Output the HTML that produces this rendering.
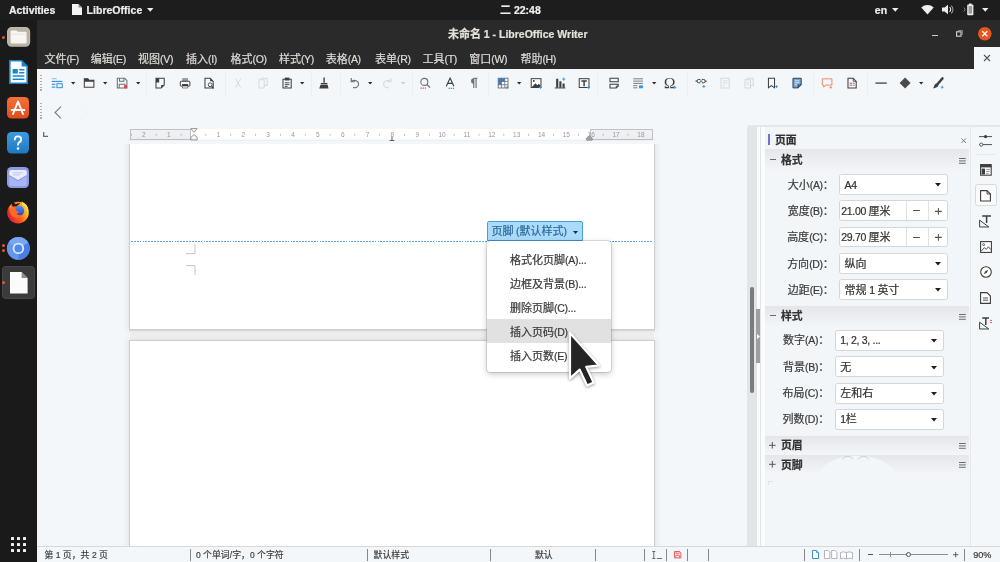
<!DOCTYPE html>
<html lang="zh-CN">
<head>
<meta charset="utf-8">
<title>未命名 1 - LibreOffice Writer</title>
<style>
html,body{margin:0;padding:0;background:#f3f7fa;}
body{width:1000px;height:562px;overflow:hidden;font-family:"Liberation Sans","Noto Sans CJK SC",sans-serif;}
#screen{position:relative;width:1000px;height:562px;overflow:hidden;will-change:transform;}
.b{position:absolute;box-sizing:border-box;}
.i{position:absolute;display:block;overflow:visible;}
.t{position:absolute;white-space:nowrap;letter-spacing:-0.3px;-webkit-text-stroke:0.22px;}
.cj{display:inline-block;position:relative;white-space:nowrap;vertical-align:baseline;letter-spacing:0;font-family:"Liberation Sans","Noto Sans CJK SC",sans-serif;}

</style>
</head>
<body>
<div id="screen">
<div class="b " style="left:0px;top:0px;width:1000px;height:19.6px;background:#1d1d1d"></div>
<div class="b " style="left:0px;top:19.6px;width:37px;height:542.4px;background:#1a1a1a"></div>
<div class="b " style="left:37px;top:19.6px;width:963px;height:49.4px;background:#2b2a2a"></div>
<div class="b " style="left:37px;top:69px;width:963px;height:493px;background:#f3f7fa"></div>
<div class="b " style="left:973.5px;top:46.5px;width:26.5px;height:23px;background:#f3f7fa"></div>
<div id="topbar">
<div class="t " style="top:1.7px;height:16px;line-height:16px;font-size:10.5px;color:#eeeeee;left:9px;font-weight:bold;letter-spacing:-0.05px">Activities</div>
<svg class="i" style="left:71.5px;top:3.8px;" width="10" height="11" viewBox="0 0 10 11"><path d="M0 0H6.5L10 3.5V11H0Z" fill="#f4f4f4"/><path d="M6.5 0L10 3.5H6.5Z" fill="#8d8d8d"/></svg>
<div class="t " style="top:1.7px;height:16px;line-height:16px;font-size:10.5px;color:#eeeeee;left:86.6px;font-weight:bold;letter-spacing:0.02px">LibreOffice</div>
<svg class="i" style="left:146.8px;top:7.9px;" width="6.5" height="4" viewBox="0 0 6.5 4"><path d="M0 0H6.5L3.25 3.8Z" fill="#eeeeee"/></svg>
<div class="t " style="top:1.8px;height:16px;line-height:16px;font-size:10.5px;color:#eeeeee;left:500px;font-weight:bold;letter-spacing:0"><span class="cj" style="width:11px;font-size:11px"><span>二</span></span> 22:48</div>
<div class="t " style="top:1.7px;height:16px;line-height:16px;font-size:10.5px;color:#eeeeee;left:874.8px;font-weight:bold;letter-spacing:0">en</div>
<svg class="i" style="left:891.6px;top:7.9px;" width="6.5" height="4" viewBox="0 0 6.5 4"><path d="M0 0H6.5L3.25 3.8Z" fill="#eeeeee"/></svg>
<svg class="i" style="left:920.5px;top:4px;" width="13" height="11" viewBox="0 0 13 11"><path d="M6.5 10.6L0.3 3.4A9.2 9.2 0 0 1 12.7 3.4Z" fill="#eeeeee"/></svg>
<svg class="i" style="left:942px;top:4px;" width="13" height="11" viewBox="0 0 13 11"><path d="M0 3.6H2.6L6 0.8V10.2L2.6 7.4H0Z" fill="#eeeeee"/><path d="M7.6 3.2A3 3 0 0 1 7.6 7.8" stroke="#eeeeee" stroke-width="1.1" fill="none"/><path d="M9.2 1.6A5.2 5.2 0 0 1 9.2 9.4" stroke="#9a9a9a" stroke-width="1.1" fill="none"/></svg>
<svg class="i" style="left:962.5px;top:3.1px;" width="13" height="13" viewBox="0 0 13 13"><path d="M0.8 4.5L2.2 6.5L0.8 8.5" stroke="#8a8a8a" stroke-width="0.9" fill="none"/><rect x="4.2" y="1.6" width="6.2" height="10.6" rx="0.9" fill="#eeeeee"/><rect x="6" y="0.5" width="2.6" height="1.5" fill="#eeeeee"/><rect x="5.5" y="3" width="3.6" height="7.6" fill="#9c9c9c"/></svg>
<svg class="i" style="left:981.8px;top:7.9px;" width="6.5" height="4" viewBox="0 0 6.5 4"><path d="M0 0H6.5L3.25 3.8Z" fill="#eeeeee"/></svg>
</div>
<div id="titlebar">
<div class="t " style="top:26.2px;height:16px;line-height:16px;font-size:10.5px;color:#e4e1db;left:317.7px;width:400px;text-align:center;font-weight:bold;letter-spacing:0"><span class="cj" style="width:33px;font-size:11px"><span>未命名</span></span> 1 - LibreOffice Writer</div>
<div class="b " style="left:931.6px;top:34.5px;width:6.4px;height:1.05px;background:#cfccc6"></div>
<svg class="i" style="left:955.8px;top:30.4px;" width="7" height="7" viewBox="0 0 7 7"><rect x="0.6" y="1.8" width="4.4" height="4.4" fill="none" stroke="#d8d5cf" stroke-width="1.1"/><path d="M2.4 1.6V0.5H6.4V4.5H5.2" fill="none" stroke="#a19e9a" stroke-width="0.8"/></svg>
<svg class="i" style="left:977.8px;top:27.1px;" width="13.6" height="13.6" viewBox="0 0 13.6 13.6"><circle cx="6.8" cy="6.8" r="6.8" fill="#e9541f"/><path d="M4.3 4.3L9.3 9.3M9.3 4.3L4.3 9.3" stroke="#fff" stroke-width="1.25"/></svg>
</div>
<div id="menubar">
<div class="t " style="top:51px;height:16px;line-height:16px;font-size:10.5px;color:#dedbd6;left:44.4px;"><span class="cj" style="width:22px;font-size:11px"><span>文件</span></span>(F)</div>
<div class="t " style="top:51px;height:16px;line-height:16px;font-size:10.5px;color:#dedbd6;left:90.8px;"><span class="cj" style="width:22px;font-size:11px"><span>编辑</span></span>(E)</div>
<div class="t " style="top:51px;height:16px;line-height:16px;font-size:10.5px;color:#dedbd6;left:138px;"><span class="cj" style="width:22px;font-size:11px"><span>视图</span></span>(V)</div>
<div class="t " style="top:51px;height:16px;line-height:16px;font-size:10.5px;color:#dedbd6;left:186px;"><span class="cj" style="width:22px;font-size:11px"><span>插入</span></span>(I)</div>
<div class="t " style="top:51px;height:16px;line-height:16px;font-size:10.5px;color:#dedbd6;left:230.5px;"><span class="cj" style="width:22px;font-size:11px"><span>格式</span></span>(O)</div>
<div class="t " style="top:51px;height:16px;line-height:16px;font-size:10.5px;color:#dedbd6;left:278.9px;"><span class="cj" style="width:22px;font-size:11px"><span>样式</span></span>(Y)</div>
<div class="t " style="top:51px;height:16px;line-height:16px;font-size:10.5px;color:#dedbd6;left:325.7px;"><span class="cj" style="width:22px;font-size:11px"><span>表格</span></span>(A)</div>
<div class="t " style="top:51px;height:16px;line-height:16px;font-size:10.5px;color:#dedbd6;left:375px;"><span class="cj" style="width:22px;font-size:11px"><span>表单</span></span>(R)</div>
<div class="t " style="top:51px;height:16px;line-height:16px;font-size:10.5px;color:#dedbd6;left:422.5px;"><span class="cj" style="width:22px;font-size:11px"><span>工具</span></span>(T)</div>
<div class="t " style="top:51px;height:16px;line-height:16px;font-size:10.5px;color:#dedbd6;left:469.3px;"><span class="cj" style="width:22px;font-size:11px"><span>窗口</span></span>(W)</div>
<div class="t " style="top:51px;height:16px;line-height:16px;font-size:10.5px;color:#dedbd6;left:520.4px;"><span class="cj" style="width:22px;font-size:11px"><span>帮助</span></span>(H)</div>
<svg class="i" style="left:983px;top:54px;" width="8" height="8" viewBox="0 0 8 8"><path d="M1 1L7 7M7 1L1 7" stroke="#555" stroke-width="1.1"/></svg>
</div>
<div id="dock">
<svg class="i" style="left:6.8px;top:27.3px;" width="23.2" height="19.8" viewBox="0 0 23.2 19.8"><rect x="0" y="0" width="23.2" height="19.8" rx="4.8" fill="#c4beb0"/><rect x="0.7" y="0.7" width="21.8" height="18.4" rx="4.2" fill="#bab3a4"/><path d="M3.6 4.6Q3.6 3.4 4.8 3.4H9.4L10.8 4.8H18.4Q19.6 4.8 19.6 6V15.2Q19.6 16.4 18.4 16.4H4.8Q3.6 16.4 3.6 15.2Z" fill="#f8f6f2"/><path d="M3.6 7.2H19.6" stroke="#e6e1d8" stroke-width="0.8"/></svg>
<div class="b" style="left:1.5px;top:35.8px;width:3px;height:3px;border-radius:50%;background:#e8562a"></div>
<svg class="i" style="left:8.9px;top:60px;" width="19" height="24" viewBox="0 0 19 24"><path d="M0.8 0.8H12.6L18.2 6.4V23.2H0.8Z" fill="#fff" stroke="#1787c9" stroke-width="1.6"/><path d="M12.6 0.8L18.2 6.4H12.6Z" fill="#1787c9"/><rect x="3.6" y="9" width="5.2" height="4.6" fill="#1787c9"/><path d="M10.2 9.8H15.4M10.2 12.8H15.4M3.6 16H15.4M3.6 19.2H15.4" stroke="#1787c9" stroke-width="1.5"/></svg>
<svg class="i" style="left:7.4px;top:97px;" width="22" height="21.5" viewBox="0 0 22 21.5"><defs><linearGradient id="gsw" x1="0" y1="0" x2="0" y2="1"><stop offset="0" stop-color="#f5703a"/><stop offset="1" stop-color="#e24d1a"/></linearGradient></defs><rect width="22" height="21.5" rx="4.5" fill="url(#gsw)"/><path d="M6 17L11 4.6L16 17M4.6 13H17.4" stroke="#fff" stroke-width="1.9" fill="none" stroke-linecap="round" stroke-linejoin="round"/></svg>
<svg class="i" style="left:7.4px;top:132.3px;" width="22" height="21.5" viewBox="0 0 22 21.5"><defs><linearGradient id="ghl" x1="0" y1="0" x2="0" y2="1"><stop offset="0" stop-color="#3b9ce2"/><stop offset="1" stop-color="#1f78c4"/></linearGradient></defs><rect width="22" height="21.5" rx="4.5" fill="url(#ghl)"/><path d="M7.8 7.6Q7.8 4.4 11 4.4Q14.2 4.4 14.2 7.4Q14.2 9.2 12.4 10.2Q11 11 11 12.8" stroke="#fff" stroke-width="1.9" fill="none" stroke-linecap="round"/><circle cx="11" cy="16.4" r="1.25" fill="#fff"/></svg>
<svg class="i" style="left:7.4px;top:167.3px;" width="22" height="21" viewBox="0 0 22 21"><rect width="22" height="21" rx="4.5" fill="#8c9be6"/><path d="M2.2 5Q2.2 3 4.2 3H17.8Q19.8 3 19.8 5V8L11 13L2.2 8Z" fill="#e9ecfb"/><path d="M2.2 9.2L11 14.2L19.8 9.2V17Q19.8 19 17.8 19H4.2Q2.2 19 2.2 17Z" fill="#a9b5f0"/><path d="M6 5.8H16M6 7.8H13" stroke="#b9c2f2" stroke-width="0.9"/></svg>
<svg class="i" style="left:6.4px;top:200px;" width="24" height="24" viewBox="0 0 24 24"><defs><linearGradient id="gff" x1="0.05" y1="0.7" x2="0.95" y2="0.25"><stop offset="0" stop-color="#e0203f"/><stop offset="0.4" stop-color="#ff4f1f"/><stop offset="0.75" stop-color="#ffa51f"/><stop offset="1" stop-color="#ffe24d"/></linearGradient><linearGradient id="gfg" x1="0" y1="0" x2="0" y2="1"><stop offset="0" stop-color="#4d93f3"/><stop offset="1" stop-color="#2b3fc4"/></linearGradient></defs><circle cx="12" cy="12.6" r="10.8" fill="url(#gff)"/><path d="M15.6 1.4Q21.4 3.6 22.8 10.4Q20.6 6 16.8 5.4Z" fill="#ffe24d"/><path d="M6.2 1.8Q8.6 2.6 9.6 4.6Q11.6 3 14.4 3.4Q11.4 4.6 10.6 6.6Q8 5.6 6.6 6.8Q5.6 4.2 6.2 1.8Z" fill="#1a1a1a"/><circle cx="13.2" cy="10.8" r="5" fill="url(#gfg)"/><path d="M3.2 9.6Q6.4 6.2 10.4 7.2Q8.8 9 10.2 10.8Q12.2 11.2 13.6 12.8Q11.6 12.6 10.6 13.8Q12.6 16.2 16.4 14.8Q14.6 18.4 10.6 18.2Q4.6 17.6 3.2 9.6Z" fill="#ff6a1f"/><path d="M3.2 9.6Q3 6.4 5 4.4Q5.2 6.6 7.2 7.2Q4.8 7.8 3.2 9.6Z" fill="#ff8a2a"/></svg>
<svg class="i" style="left:7px;top:236.6px;" width="22.8" height="22.8" viewBox="0 0 22.8 22.8"><circle cx="11.4" cy="11.4" r="11.4" fill="#5a8fe8"/><path d="M11.4 11.4L1.5 5.7A11.4 11.4 0 0 1 21.3 5.7Z" fill="#78a6f3"/><path d="M11.4 11.4L21.3 5.7A11.4 11.4 0 0 1 11.4 22.8Z" fill="#4a7fe0"/><path d="M11.4 11.4L11.4 22.8A11.4 11.4 0 0 1 1.5 5.7Z" fill="#6496ec"/><circle cx="11.4" cy="11.4" r="5.7" fill="#d9e6fb"/><circle cx="11.4" cy="11.4" r="3.9" fill="#4f8aea"/></svg>
<div class="b" style="left:1.5px;top:243.9px;width:3px;height:3px;border-radius:50%;background:#e8562a"></div>
<div class="b" style="left:1.5px;top:248.9px;width:3px;height:3px;border-radius:50%;background:#e8562a"></div>
<div class="b " style="left:1.5px;top:266px;width:33.2px;height:33px;background:#3b3b3b;border-radius:3.5px;border:0.5px solid #474747"></div>
<svg class="i" style="left:9.6px;top:272px;" width="17.6" height="21.5" viewBox="0 0 17.6 21.5"><path d="M0 0H11.6L17.6 6V21.5H0Z" fill="#fbfbfb"/><path d="M11.6 0L17.6 6H11.6Z" fill="#8b8b8b"/></svg>
<div class="b" style="left:1.5px;top:281.2px;width:3px;height:3px;border-radius:50%;background:#e8562a"></div>
<div class="b" style="left:10.8px;top:537.1px;width:3.2px;height:3.2px;background:#f0f0f0;border-radius:0.6px"></div>
<div class="b" style="left:16.7px;top:537.1px;width:3.2px;height:3.2px;background:#f0f0f0;border-radius:0.6px"></div>
<div class="b" style="left:22.6px;top:537.1px;width:3.2px;height:3.2px;background:#f0f0f0;border-radius:0.6px"></div>
<div class="b" style="left:10.8px;top:543px;width:3.2px;height:3.2px;background:#f0f0f0;border-radius:0.6px"></div>
<div class="b" style="left:16.7px;top:543px;width:3.2px;height:3.2px;background:#f0f0f0;border-radius:0.6px"></div>
<div class="b" style="left:22.6px;top:543px;width:3.2px;height:3.2px;background:#f0f0f0;border-radius:0.6px"></div>
<div class="b" style="left:10.8px;top:548.9px;width:3.2px;height:3.2px;background:#f0f0f0;border-radius:0.6px"></div>
<div class="b" style="left:16.7px;top:548.9px;width:3.2px;height:3.2px;background:#f0f0f0;border-radius:0.6px"></div>
<div class="b" style="left:22.6px;top:548.9px;width:3.2px;height:3.2px;background:#f0f0f0;border-radius:0.6px"></div>
</div>
<div id="toolbars">
<svg class="i" style="left:50.9px;top:77.2px;" width="12.2" height="12.2" viewBox="0 0 16 16"><path d="M1 2.2H7.5" fill="none" stroke="#8ec4ec" stroke-width="1.5" /><path d="M1 5.8H15" fill="none" stroke="#3b97de" stroke-width="1.5" /><path d="M1 9.6H5.6M1 13.2H5.6" fill="none" stroke="#3b97de" stroke-width="1.5" /><rect x="7.8" y="8.8" width="7" height="5.2" fill="none" stroke="#3b97de" stroke-width="1.4"/></svg>
<svg class="i" style="left:71.3px;top:82.4px;" width="4.4" height="2.6" viewBox="0 0 4.4 2.6"><path d="M0 0H4.4L2.2 2.6Z" fill="#2b2b2b"/></svg>
<svg class="i" style="left:83.4px;top:77.2px;" width="12.2" height="12.2" viewBox="0 0 16 16"><path d="M1.7 13.6V2.4H6.4L7.8 4.4H14.3V13.6Z" fill="none" stroke="#3e3e3e" stroke-width="1.35" /><path d="M1.7 2.4H6.4L7.8 4.4H14.3V6.2H1.7Z" fill="#3e3e3e"/></svg>
<svg class="i" style="left:103.4px;top:82.4px;" width="4.4" height="2.6" viewBox="0 0 4.4 2.6"><path d="M0 0H4.4L2.2 2.6Z" fill="#2b2b2b"/></svg>
<svg class="i" style="left:115.5px;top:77.2px;" width="12.2" height="12.2" viewBox="0 0 16 16"><path d="M1.7 1.7H11.4L14.3 4.6V14.3H1.7Z" fill="none" stroke="#6f6f6f" stroke-width="1.35" /><path d="M4.6 1.7V5.6H10.4V1.7" fill="none" stroke="#6f6f6f" stroke-width="1.35" /><path d="M4.2 14.3V9.4H11.8V14.3" fill="none" stroke="#6f6f6f" stroke-width="1.35" /><circle cx="12.6" cy="12.8" r="2.3" fill="#e4434b"/></svg>
<svg class="i" style="left:135.8px;top:82.4px;" width="4.4" height="2.6" viewBox="0 0 4.4 2.6"><path d="M0 0H4.4L2.2 2.6Z" fill="#2b2b2b"/></svg>
<div class="b " style="left:145.9px;top:72.5px;width:1px;height:22.5px;background:#ebeef2"></div>
<svg class="i" style="left:153.9px;top:77.2px;" width="12.2" height="12.2" viewBox="0 0 16 16"><path d="M2.6 1.7H13.4V10.4L9.4 14.3H2.6Z" fill="none" stroke="#3e3e3e" stroke-width="1.35" /><path d="M2.6 1.7H6.8V7.2H2.6Z" fill="#3e3e3e"/><path d="M13.4 10.4L9.4 14.3V10.4Z" fill="#3e3e3e"/></svg>
<svg class="i" style="left:178.5px;top:77.2px;" width="12.2" height="12.2" viewBox="0 0 16 16"><rect x="4.2" y="1.4" width="7.6" height="4" fill="#9b9b9b"/><rect x="1.7" y="5.6" width="12.6" height="6.4" rx="1" fill="#f7f8f9" stroke="#3e3e3e" stroke-width="1.3"/><rect x="4" y="9.4" width="8" height="2.3" fill="#2c2c2c"/><path d="M4.6 12.4V14.4H11.4V12.4" fill="#fff" stroke="#6f6f6f" stroke-width="1.1"/></svg>
<svg class="i" style="left:202.7px;top:77.2px;" width="12.2" height="12.2" viewBox="0 0 16 16"><path d="M2.6 1.7H9.4L13.4 5.7V14.3H2.6Z" fill="none" stroke="#3e3e3e" stroke-width="1.35" /><path d="M9.4 1.7L13.4 5.7H9.4Z" fill="#3e3e3e"/><circle cx="9.4" cy="10.2" r="2.5" fill="#fff" stroke="#3e3e3e" stroke-width="1.2"/><path d="M11.2 12L13.8 14.8" fill="none" stroke="#3e3e3e" stroke-width="1.5" /></svg>
<div class="b " style="left:224.5px;top:72.5px;width:1px;height:22.5px;background:#ebeef2"></div>
<svg class="i" style="left:231.9px;top:77.2px;" width="12.2" height="12.2" viewBox="0 0 16 16"><path d="M4.4 2L11.2 13.6M11.6 2L4.8 13.6" fill="none" stroke="#d6dade" stroke-width="1.3" /></svg>
<svg class="i" style="left:256.9px;top:77.2px;" width="12.2" height="12.2" viewBox="0 0 16 16"><path d="M2.6 3.6H9.4V14.3H2.6Z" fill="none" stroke="#d6dade" stroke-width="1.35" /><path d="M5.6 3.4V1.7H13.4V11H9.6" fill="none" stroke="#d6dade" stroke-width="1.35" /></svg>
<svg class="i" style="left:280.5px;top:77.2px;" width="12.2" height="12.2" viewBox="0 0 16 16"><path d="M2.6 3H13.4V14.4H2.6Z" fill="none" stroke="#3e3e3e" stroke-width="1.35" /><path d="M5 0.8H11V4.6H5Z" fill="#3e3e3e"/><path d="M5 7.6H11M5 10H11M5 12.4H8.6" fill="none" stroke="#3e3e3e" stroke-width="1.2" /></svg>
<svg class="i" style="left:300.4px;top:82.4px;" width="4.4" height="2.6" viewBox="0 0 4.4 2.6"><path d="M0 0H4.4L2.2 2.6Z" fill="#2b2b2b"/></svg>
<div class="b " style="left:310.8px;top:72.5px;width:1px;height:22.5px;background:#ebeef2"></div>
<svg class="i" style="left:318.3px;top:77.2px;" width="12.2" height="12.2" viewBox="0 0 16 16"><path d="M7.1 0.8H8.9V7.6H7.1Z" fill="#3e3e3e"/><path d="M3.6 7.8H12.4V9.8H3.6Z" fill="#3e3e3e"/><path d="M3.2 10.6H12.8L13.8 15.2H1.6Z" fill="#3e3e3e"/></svg>
<div class="b " style="left:339.5px;top:72.5px;width:1px;height:22.5px;background:#ebeef2"></div>
<svg class="i" style="left:348.5px;top:77.2px;" width="12.2" height="12.2" viewBox="0 0 16 16"><path d="M3.6 5.6C7.5 3.2 12.8 5.2 12.6 9.6C12.4 13.2 8.6 15 5.4 13.6" fill="none" stroke="#6f6f6f" stroke-width="1.5" /><path d="M3 1.2V6.2H8" fill="none" stroke="#6f6f6f" stroke-width="1.5" /></svg>
<svg class="i" style="left:368.4px;top:82.4px;" width="4.4" height="2.6" viewBox="0 0 4.4 2.6"><path d="M0 0H4.4L2.2 2.6Z" fill="#2b2b2b"/></svg>
<svg class="i" style="left:380.9px;top:77.2px;" width="12.2" height="12.2" viewBox="0 0 16 16"><path d="M12.4 5.6C8.5 3.2 3.2 5.2 3.4 9.6C3.6 13.2 7.4 15 10.6 13.6" fill="none" stroke="#d6dade" stroke-width="1.5" /><path d="M13 1.2V6.2H8" fill="none" stroke="#d6dade" stroke-width="1.5" /></svg>
<svg class="i" style="left:400.8px;top:82.4px;" width="4.4" height="2.6" viewBox="0 0 4.4 2.6"><path d="M0 0H4.4L2.2 2.6Z" fill="#c9cdd2"/></svg>
<div class="b " style="left:411.8px;top:72.5px;width:1px;height:22.5px;background:#ebeef2"></div>
<svg class="i" style="left:418.9px;top:77.2px;" width="12.2" height="12.2" viewBox="0 0 16 16"><circle cx="7" cy="6.4" r="4.6" fill="none" stroke="#6f6f6f" stroke-width="1.4"/><path d="M10.4 9.8L14.6 14" fill="none" stroke="#6f6f6f" stroke-width="1.6" /><path d="M2 14.6H9" fill="none" stroke="#e4434b" stroke-width="1.4" stroke-dasharray="1.6 1.2"/></svg>
<svg class="i" style="left:443.5px;top:77.2px;" width="12.2" height="12.2" viewBox="0 0 16 16"><path d="M3 12L8 1.4L13 12M4.8 8.4H11.2" fill="none" stroke="#3e3e3e" stroke-width="1.5" /><path d="M6 15H13.6" fill="none" stroke="#39a66b" stroke-width="1.5" stroke-dasharray="1.6 1.2"/></svg>
<svg class="i" style="left:467.9px;top:77.2px;" width="12.2" height="12.2" viewBox="0 0 16 16"><path d="M10.6 1.6V14.6M7.6 1.6V14.6M12.4 1.6H7" fill="none" stroke="#6f6f6f" stroke-width="1.5" /><path d="M7.6 1.6A3.6 3.6 0 0 0 7.6 8.8Z" fill="#6f6f6f"/></svg>
<div class="b " style="left:487.8px;top:72.5px;width:1px;height:22.5px;background:#ebeef2"></div>
<svg class="i" style="left:496.9px;top:77.2px;" width="12.2" height="12.2" viewBox="0 0 16 16"><rect x="1.6" y="1.6" width="12.8" height="12.8" fill="#fff" stroke="#6f6f6f" stroke-width="1.2"/><path d="M1.6 1.6H10.2V5.8H5.8V10.2H1.6Z" fill="#3a7fc4"/><path d="M5.8 1.6V14.4M10.2 1.6V14.4M1.6 5.8H14.4M1.6 10.2H14.4" fill="none" stroke="#6f6f6f" stroke-width="1.1" /><path d="M11.5 13.6H15.3M13.4 11.7V15.5" stroke="#3b97de" stroke-width="1.2" fill="none"/></svg>
<svg class="i" style="left:517.2px;top:82.4px;" width="4.4" height="2.6" viewBox="0 0 4.4 2.6"><path d="M0 0H4.4L2.2 2.6Z" fill="#2b2b2b"/></svg>
<svg class="i" style="left:529.9px;top:77.2px;" width="12.2" height="12.2" viewBox="0 0 16 16"><rect x="1.6" y="2.2" width="12.8" height="11.6" fill="#fff" stroke="#3e3e3e" stroke-width="1.3"/><path d="M2.2 13.4L7.2 8.2L9.6 10.8L11.6 9L14 11.6V13.4Z" fill="#3e3e3e"/><circle cx="5" cy="5.4" r="1.3" fill="#3e3e3e"/><path d="M11.7 13.8H15.5M13.6 11.9V15.700000000000001" stroke="#3b97de" stroke-width="1.2" fill="none"/></svg>
<svg class="i" style="left:553.9px;top:77.2px;" width="12.2" height="12.2" viewBox="0 0 16 16"><path d="M2.8 2.4H5.6V14H2.8ZM7 5.6H9.8V14H7ZM11.2 8.4H14V14H11.2Z" fill="#3e3e3e"/><path d="M1 14.4H15" fill="none" stroke="#3e3e3e" stroke-width="1.2" /><path d="M10.700000000000001 2.8H14.9M12.8 0.6999999999999997V4.9" stroke="#3b97de" stroke-width="1.2" fill="none"/></svg>
<svg class="i" style="left:578.2px;top:77.2px;" width="12.2" height="12.2" viewBox="0 0 16 16"><rect x="1.6" y="2.2" width="12.8" height="11.6" fill="none" stroke="#3e3e3e" stroke-width="1.3"/><path d="M4.4 5.2H11.6M8 5.2V12" fill="none" stroke="#3e3e3e" stroke-width="1.9" /><path d="M12.1 14H15.9M14 12.1V15.9" stroke="#3b97de" stroke-width="1.2" fill="none"/></svg>
<div class="b " style="left:596.8px;top:72.5px;width:1px;height:22.5px;background:#ebeef2"></div>
<svg class="i" style="left:607.9px;top:77.2px;" width="12.2" height="12.2" viewBox="0 0 16 16"><path d="M2.6 1.7H13.4V6.2H2.6Z" fill="none" stroke="#3e3e3e" stroke-width="1.35" /><path d="M2.6 9.4H13.4V11.8L10.8 14.3H2.6Z" fill="none" stroke="#3e3e3e" stroke-width="1.35" /><path d="M13.4 11.8H10.8V14.3" fill="none" stroke="#3e3e3e" stroke-width="1" /></svg>
<svg class="i" style="left:631.7px;top:77.2px;" width="12.2" height="12.2" viewBox="0 0 16 16"><path d="M1.6 2.4H14.4M1.6 5.4H14.4M1.6 8.4H14.4M1.6 11.4H7M1.6 14.2H7" fill="none" stroke="#7a7a7a" stroke-width="1.3" /><path d="M9.2 11H14.4V14.8H9.2Z" fill="#3b97de"/></svg>
<svg class="i" style="left:651.8px;top:82.4px;" width="4.4" height="2.6" viewBox="0 0 4.4 2.6"><path d="M0 0H4.4L2.2 2.6Z" fill="#2b2b2b"/></svg>
<svg class="i" style="left:663.9px;top:77.2px;" width="12.2" height="12.2" viewBox="0 0 16 16"><g transform="translate(7.4 8.6) scale(1.1) translate(-7.4 -8.6)"><path d="M7.4 2.67Q5.36 2.67 4.36 3.7Q3.37 4.72 3.37 6.96Q3.37 8.76 4.2 9.84Q5.03 10.91 6.56 11.1L6.8 14.2H1.66L1.49 11.22H2.09L2.6 12.52Q3.33 12.66 5.17 12.66H5.82L5.73 11.75Q3.79 11.45 2.63 10.16Q1.48 8.87 1.48 6.96Q1.48 4.51 2.98 3.23Q4.48 1.95 7.4 1.95Q10.32 1.95 11.82 3.23Q13.32 4.51 13.32 6.96Q13.32 8.87 12.16 10.16Q11.0 11.45 9.07 11.75L8.98 12.66H9.63Q11.47 12.66 12.2 12.52L12.71 11.22H13.31L13.14 14.2H8.0L8.24 11.1Q9.78 10.91 10.6 9.84Q11.43 8.76 11.43 6.96Q11.43 4.72 10.44 3.69Q9.44 2.67 7.4 2.67Z" fill="#3e3e3e"/></g><path d="M12.299999999999999 13.8H16.099999999999998M14.2 11.9V15.700000000000001" stroke="#3b97de" stroke-width="1.2" fill="none"/></svg>
<div class="b " style="left:686.5px;top:72.5px;width:1px;height:22.5px;background:#ebeef2"></div>
<svg class="i" style="left:694.9px;top:77.2px;" width="12.2" height="12.2" viewBox="0 0 16 16"><path d="M0.6 5.4H2.8M13.2 5.4H15.4M6.4 5.4H9.6" fill="none" stroke="#3e3e3e" stroke-width="1.3" /><path d="M7 3.2H4.8A2.2 2.2 0 0 0 4.8 7.6H7M9 3.2H11.2A2.2 2.2 0 0 1 11.2 7.6H9" fill="none" stroke="#3e3e3e" stroke-width="1.3" /><path d="M9.7 12.4H13.5M11.6 10.5V14.3" stroke="#3b97de" stroke-width="1.2" fill="none"/></svg>
<svg class="i" style="left:718.5px;top:77.2px;" width="12.2" height="12.2" viewBox="0 0 16 16"><path d="M2.6 1.7H13.4V14.3H2.6Z" fill="none" stroke="#d6dade" stroke-width="1.35" /><path d="M5 5H11M5 8H11M5 11.4H8" fill="none" stroke="#d6dade" stroke-width="1.2" /></svg>
<svg class="i" style="left:742.5px;top:77.2px;" width="12.2" height="12.2" viewBox="0 0 16 16"><path d="M2.6 3.6H9.8V14.3H2.6Z" fill="none" stroke="#d6dade" stroke-width="1.35" /><path d="M5.6 3.4V1.7H13.4V11.4H10" fill="none" stroke="#d6dade" stroke-width="1.35" /><path d="M4.6 7H8M4.6 10H8" fill="none" stroke="#d6dade" stroke-width="1.1" /></svg>
<svg class="i" style="left:765.9px;top:77.2px;" width="12.2" height="12.2" viewBox="0 0 16 16"><path d="M3.2 1.7H11.2V14.2L7.2 11.2L3.2 14.2Z" fill="none" stroke="#3e3e3e" stroke-width="1.35" /><path d="M11.9 12.6H15.700000000000001M13.8 10.7V14.5" stroke="#3b97de" stroke-width="1.2" fill="none"/></svg>
<svg class="i" style="left:790.9px;top:77.2px;" width="12.2" height="12.2" viewBox="0 0 16 16"><path d="M2.6 1.7H13.4V10.4L9.4 14.3H2.6Z" fill="#6ea9de" stroke="#3e3e3e" stroke-width="1.3"/><path d="M13.4 10.4H9.4V14.3" fill="none" stroke="#3e3e3e" stroke-width="1.35" /><path d="M5 5H11M5 7.6H11M5 10.2H8" fill="none" stroke="#dcecf9" stroke-width="1.1" /></svg>
<div class="b " style="left:812.5px;top:72.5px;width:1px;height:22.5px;background:#ebeef2"></div>
<svg class="i" style="left:820.9px;top:77.2px;" width="12.2" height="12.2" viewBox="0 0 16 16"><path d="M1.7 2.4H14.3V10.6H6.2L3.6 13.4V10.6H1.7Z" fill="none" stroke="#ee8560" stroke-width="1.25" /><path d="M11.0 13.6H14.600000000000001M12.8 11.799999999999999V15.4" stroke="#ee8560" stroke-width="1.1" fill="none"/></svg>
<svg class="i" style="left:845.5px;top:77.2px;" width="12.2" height="12.2" viewBox="0 0 16 16"><path d="M2.6 1.7H9.4L13.4 5.7V14.3H2.6Z" fill="none" stroke="#3e3e3e" stroke-width="1.35" /><path d="M9.4 1.7V5.7H13.4" fill="none" stroke="#3e3e3e" stroke-width="1" /><path d="M4.8 8.2H8M9.4 10.8H11.4" fill="none" stroke="#e4434b" stroke-width="1.3" /><path d="M9 8.2H11.4M4.8 10.8H8.4" fill="none" stroke="#6f6f6f" stroke-width="1.2" /></svg>
<div class="b " style="left:866.5px;top:72.5px;width:1px;height:22.5px;background:#ebeef2"></div>
<svg class="i" style="left:874.9px;top:77.2px;" width="12.2" height="12.2" viewBox="0 0 16 16"><path d="M0.6 8H15.4" fill="none" stroke="#3e3e3e" stroke-width="1.7" /></svg>
<svg class="i" style="left:898.9px;top:77.2px;" width="12.2" height="12.2" viewBox="0 0 16 16"><path d="M8 0.8L15.2 8L8 15.2L0.8 8Z" fill="#4a4a4a"/></svg>
<svg class="i" style="left:919px;top:82.4px;" width="4.4" height="2.6" viewBox="0 0 4.4 2.6"><path d="M0 0H4.4L2.2 2.6Z" fill="#2b2b2b"/></svg>
<svg class="i" style="left:931.9px;top:77.2px;" width="12.2" height="12.2" viewBox="0 0 16 16"><path d="M13.8 1.8L7.4 9.2" fill="none" stroke="#3e3e3e" stroke-width="3.2" stroke-linecap="round"/><path d="M5.8 8.2L8.6 10.8C7.2 13.8 4.2 14.2 1.4 15C2.8 12.6 3 9.6 5.8 8.2Z" fill="#3e3e3e"/><path d="M11.5 13.4H15.3M13.4 11.5V15.3" stroke="#3b97de" stroke-width="1.2" fill="none"/></svg>
<div class="b " style="left:39.9px;top:75px;width:1.8px;height:16.5px;background:repeating-linear-gradient(to bottom,#a9aeb4 0 1.5px,transparent 1.5px 2.9px)"></div>
<div class="b " style="left:39.9px;top:103px;width:1.8px;height:17px;background:repeating-linear-gradient(to bottom,#a9aeb4 0 1.5px,transparent 1.5px 2.9px)"></div>
<svg class="i" style="left:54px;top:105.5px;" width="8" height="13" viewBox="0 0 8 13"><path d="M7 0.6L1 6.5L7 12.4" fill="none" stroke="#7d7d7d" stroke-width="1.1"/></svg>
<svg class="i" style="left:81px;top:105.5px;" width="8" height="13" viewBox="0 0 8 13"><path d="M1 0.6L7 6.5L1 12.4" fill="none" stroke="#eef1f5" stroke-width="1"/></svg>
</div>
<div id="ruler">
<div class="b " style="left:748px;top:125.4px;width:252px;height:1.2px;background:#e4e7ea"></div>
<div class="b " style="left:130.3px;top:129px;width:522.4px;height:11.4px;background:#ffffff"></div>
<div class="b " style="left:130.3px;top:129px;width:61px;height:11.4px;background:#eef0f2;border:1px solid #bfc2c6"></div>
<div class="b " style="left:590px;top:129px;width:62.7px;height:11.4px;background:#eef0f2;border:1px solid #bfc2c6"></div>
<svg class="i" style="left:130.3px;top:129px;" width="522.4" height="11.4" viewBox="0 0 522.4 11.4"><rect x="0.77" y="4.6" width="0.8" height="2.4" fill="#b6b9bd"/><rect x="25.62" y="4.6" width="0.8" height="2.4" fill="#b6b9bd"/><rect x="50.47" y="4.6" width="0.8" height="2.4" fill="#b6b9bd"/><rect x="75.32" y="4.6" width="0.8" height="2.4" fill="#b6b9bd"/><rect x="100.17" y="4.6" width="0.8" height="2.4" fill="#b6b9bd"/><rect x="125.02" y="4.6" width="0.8" height="2.4" fill="#b6b9bd"/><rect x="149.87" y="4.6" width="0.8" height="2.4" fill="#b6b9bd"/><rect x="174.72" y="4.6" width="0.8" height="2.4" fill="#b6b9bd"/><rect x="199.57" y="4.6" width="0.8" height="2.4" fill="#b6b9bd"/><rect x="224.42" y="4.6" width="0.8" height="2.4" fill="#b6b9bd"/><rect x="249.28" y="4.6" width="0.8" height="2.4" fill="#b6b9bd"/><rect x="274.13" y="4.6" width="0.8" height="2.4" fill="#b6b9bd"/><rect x="298.98" y="4.6" width="0.8" height="2.4" fill="#b6b9bd"/><rect x="323.82" y="4.6" width="0.8" height="2.4" fill="#b6b9bd"/><rect x="348.68" y="4.6" width="0.8" height="2.4" fill="#b6b9bd"/><rect x="373.53" y="4.6" width="0.8" height="2.4" fill="#b6b9bd"/><rect x="398.38" y="4.6" width="0.8" height="2.4" fill="#b6b9bd"/><rect x="423.23" y="4.6" width="0.8" height="2.4" fill="#b6b9bd"/><rect x="448.07" y="4.6" width="0.8" height="2.4" fill="#b6b9bd"/><rect x="472.93" y="4.6" width="0.8" height="2.4" fill="#b6b9bd"/><rect x="497.78" y="4.6" width="0.8" height="2.4" fill="#b6b9bd"/></svg>
<div class="t" style="left:133.9px;width:20px;text-align:center;top:129.6px;height:10px;line-height:10px;font-size:6.5px;letter-spacing:0;-webkit-text-stroke:0;color:#96999e">2</div>
<div class="t" style="left:158.75px;width:20px;text-align:center;top:129.6px;height:10px;line-height:10px;font-size:6.5px;letter-spacing:0;-webkit-text-stroke:0;color:#96999e">1</div>
<div class="t" style="left:208.45px;width:20px;text-align:center;top:129.6px;height:10px;line-height:10px;font-size:6.5px;letter-spacing:0;-webkit-text-stroke:0;color:#96999e">1</div>
<div class="t" style="left:233.3px;width:20px;text-align:center;top:129.6px;height:10px;line-height:10px;font-size:6.5px;letter-spacing:0;-webkit-text-stroke:0;color:#96999e">2</div>
<div class="t" style="left:258.15px;width:20px;text-align:center;top:129.6px;height:10px;line-height:10px;font-size:6.5px;letter-spacing:0;-webkit-text-stroke:0;color:#96999e">3</div>
<div class="t" style="left:283px;width:20px;text-align:center;top:129.6px;height:10px;line-height:10px;font-size:6.5px;letter-spacing:0;-webkit-text-stroke:0;color:#96999e">4</div>
<div class="t" style="left:307.85px;width:20px;text-align:center;top:129.6px;height:10px;line-height:10px;font-size:6.5px;letter-spacing:0;-webkit-text-stroke:0;color:#96999e">5</div>
<div class="t" style="left:332.7px;width:20px;text-align:center;top:129.6px;height:10px;line-height:10px;font-size:6.5px;letter-spacing:0;-webkit-text-stroke:0;color:#96999e">6</div>
<div class="t" style="left:357.55px;width:20px;text-align:center;top:129.6px;height:10px;line-height:10px;font-size:6.5px;letter-spacing:0;-webkit-text-stroke:0;color:#96999e">7</div>
<div class="t" style="left:382.4px;width:20px;text-align:center;top:129.6px;height:10px;line-height:10px;font-size:6.5px;letter-spacing:0;-webkit-text-stroke:0;color:#96999e">8</div>
<div class="t" style="left:407.25px;width:20px;text-align:center;top:129.6px;height:10px;line-height:10px;font-size:6.5px;letter-spacing:0;-webkit-text-stroke:0;color:#96999e">9</div>
<div class="t" style="left:432.1px;width:20px;text-align:center;top:129.6px;height:10px;line-height:10px;font-size:6.5px;letter-spacing:0;-webkit-text-stroke:0;color:#96999e">10</div>
<div class="t" style="left:456.95px;width:20px;text-align:center;top:129.6px;height:10px;line-height:10px;font-size:6.5px;letter-spacing:0;-webkit-text-stroke:0;color:#96999e">11</div>
<div class="t" style="left:481.8px;width:20px;text-align:center;top:129.6px;height:10px;line-height:10px;font-size:6.5px;letter-spacing:0;-webkit-text-stroke:0;color:#96999e">12</div>
<div class="t" style="left:506.65px;width:20px;text-align:center;top:129.6px;height:10px;line-height:10px;font-size:6.5px;letter-spacing:0;-webkit-text-stroke:0;color:#96999e">13</div>
<div class="t" style="left:531.5px;width:20px;text-align:center;top:129.6px;height:10px;line-height:10px;font-size:6.5px;letter-spacing:0;-webkit-text-stroke:0;color:#96999e">14</div>
<div class="t" style="left:556.35px;width:20px;text-align:center;top:129.6px;height:10px;line-height:10px;font-size:6.5px;letter-spacing:0;-webkit-text-stroke:0;color:#96999e">15</div>
<div class="t" style="left:581.2px;width:20px;text-align:center;top:129.6px;height:10px;line-height:10px;font-size:6.5px;letter-spacing:0;-webkit-text-stroke:0;color:#96999e">16</div>
<div class="t" style="left:606.05px;width:20px;text-align:center;top:129.6px;height:10px;line-height:10px;font-size:6.5px;letter-spacing:0;-webkit-text-stroke:0;color:#96999e">17</div>
<div class="t" style="left:630.9px;width:20px;text-align:center;top:129.6px;height:10px;line-height:10px;font-size:6.5px;letter-spacing:0;-webkit-text-stroke:0;color:#96999e">18</div>
<svg class="i" style="left:189.6px;top:128.4px;" width="8" height="12.6" viewBox="0 0 8 12.6"><path d="M0.8 0.6H7.2L4 4.4Z M0.8 12H7.2V9.4L4 6.6L0.8 9.4Z" fill="#f7f8f9" stroke="#8a8d91" stroke-width="0.9"/></svg>
<svg class="i" style="left:586.2px;top:135.2px;" width="6.8" height="5.6" viewBox="0 0 6.8 5.6"><path d="M0.6 5.2H6.2V3L3.4 0.6L0.6 3Z" fill="#a3a6aa" stroke="#85888c" stroke-width="0.7"/></svg>
<svg class="i" style="left:389.4px;top:136.6px;" width="6" height="4.4" viewBox="0 0 6 4.4"><path d="M3 0V3.4M0.6 3.6H5.4" stroke="#55585c" stroke-width="1" fill="none"/></svg>
<svg class="i" style="left:43.2px;top:132.4px;" width="5" height="5" viewBox="0 0 5 5"><path d="M0.7 0V4.3H5" stroke="#6a6a6a" stroke-width="1.3" fill="none"/></svg>
</div>
<div id="document">
<div class="b " style="left:129.6px;top:329px;width:524.6px;height:12px;background:#f1f2f3"></div>
<div class="b " style="left:130px;top:143.6px;width:523.8px;height:185.6px;background:#fff;box-shadow:0 0 0 0.9px #c9cbce, 0 0 7px 1px rgba(70,80,90,.17)"></div>
<div class="b " style="left:130px;top:340.6px;width:523.8px;height:206.4px;background:#fff;box-shadow:0 0 0 0.9px #c9cbce, 0 0 7px 1px rgba(70,80,90,.17)"></div>
<div class="b " style="left:129.2px;top:329.9px;width:525.4px;height:1.6px;background:linear-gradient(to bottom,#c6c8ca,#e6e7e9)"></div>
<div class="b " style="left:118px;top:140.5px;width:548px;height:3.1px;background:#f3f7fa"></div>
<div class="b " style="left:131px;top:240.5px;width:522px;height:1.1px;background:repeating-linear-gradient(to right,#5fa6d8 0 1.8px,transparent 1.8px 2.9px)"></div>
<svg class="i" style="left:185.5px;top:243.5px;" width="9.5" height="10.5" viewBox="0 0 9.5 10.5"><path d="M9 0V9.6H0" stroke="#c3c5c8" stroke-width="1" fill="none"/></svg>
<svg class="i" style="left:185.5px;top:264.5px;" width="9.5" height="10.5" viewBox="0 0 9.5 10.5"><path d="M0 0.6H9V10" stroke="#c3c5c8" stroke-width="1" fill="none"/></svg>
<div class="b " style="left:487.1px;top:221.4px;width:95.6px;height:19.3px;background:#aadbfa;border:1px solid #4c9fd6;border-radius:2px 2px 0 0"></div>
<div class="t " style="top:222.9px;height:16px;line-height:16px;font-size:10.5px;color:#2e6b9b;left:491.4px;letter-spacing:-0.2px"><span class="cj" style="width:22px;font-size:11px"><span>页脚</span></span> (<span class="cj" style="width:44px;font-size:11px"><span>默认样式</span></span>)</div>
<svg class="i" style="left:572.9px;top:230.6px;" width="5" height="3" viewBox="0 0 5 3"><path d="M0 0H5L2.5 3Z" fill="#1f2a33"/></svg>
</div>
<div id="popup-menu">
<div class="b " style="left:486.8px;top:240.7px;width:124px;height:131.8px;background:#fff;border-radius:3px;box-shadow:0 0 0 0.7px rgba(0,0,0,.16),0 2px 6px rgba(0,0,0,.22)"></div>
<div class="b " style="left:486.8px;top:319.2px;width:124px;height:23.5px;background:#e1e1e1"></div>
<div class="t " style="top:251.9px;height:16px;line-height:16px;font-size:10.5px;color:#3a3a3a;left:509.9px;letter-spacing:-0.2px"><span class="cj" style="width:55px;font-size:11px"><span>格式化页脚</span></span>(A)...</div>
<div class="t " style="top:275.85px;height:16px;line-height:16px;font-size:10.5px;color:#3a3a3a;left:509.9px;letter-spacing:-0.2px"><span class="cj" style="width:55px;font-size:11px"><span>边框及背景</span></span>(B)...</div>
<div class="t " style="top:299.8px;height:16px;line-height:16px;font-size:10.5px;color:#3a3a3a;left:509.9px;letter-spacing:-0.2px"><span class="cj" style="width:44px;font-size:11px"><span>删除页脚</span></span>(C)...</div>
<div class="t " style="top:323.75px;height:16px;line-height:16px;font-size:10.5px;color:#3a3a3a;left:509.9px;letter-spacing:-0.2px"><span class="cj" style="width:44px;font-size:11px"><span>插入页码</span></span>(D)</div>
<div class="t " style="top:347.7px;height:16px;line-height:16px;font-size:10.5px;color:#3a3a3a;left:509.9px;letter-spacing:-0.2px"><span class="cj" style="width:44px;font-size:11px"><span>插入页数</span></span>(E)</div>
</div>
<div id="scrollbar">
<div class="b " style="left:747.4px;top:126.6px;width:9.2px;height:420.4px;background:#e2e5e6"></div>
<div class="b " style="left:749.7px;top:286.6px;width:4.6px;height:106.6px;background:#7b7b7b;border-radius:2.3px"></div>
<div class="b " style="left:756.6px;top:126.6px;width:4.8px;height:420.4px;background:#fbfcfd"></div>
<div class="b " style="left:756.2px;top:309.4px;width:5.2px;height:53.6px;background:#9f9f9f"></div>
<svg class="i" style="left:757.3px;top:333.6px;" width="3" height="5" viewBox="0 0 3 5"><path d="M0 0L3 2.5L0 5Z" fill="#fff"/></svg>
</div>
<div id="sidebar">
<div class="b " style="left:760.2px;top:126.6px;width:1.2px;height:420.4px;background:#e2e5e8"></div>
<div class="b " style="left:761.4px;top:126.6px;width:3.2px;height:420.4px;background:#fbfcfd"></div>
<div class="b " style="left:764.6px;top:126.6px;width:205.6px;height:420.4px;background:#f3f6f9"></div>
<div class="b " style="left:970px;top:126.6px;width:1px;height:420.4px;background:#e6e9ec"></div>
<div class="b " style="left:768px;top:134.2px;width:1.6px;height:11.2px;background:#6b73d9"></div>
<div class="t " style="top:132.3px;height:16px;line-height:16px;font-size:10.31px;color:#333;left:774.9px;"><span class="cj" style="width:21.6px;font-size:10.8px;font-weight:bold"><span>页面</span></span></div>
<svg class="i" style="left:960.8px;top:137.6px;" width="5.4" height="5.4" viewBox="0 0 5.4 5.4"><path d="M0.4 0.4L5 5M5 0.4L0.4 5" stroke="#6e6e6e" stroke-width="0.9"/></svg>
<div class="b " style="left:764.6px;top:149.4px;width:204px;height:21.6px;background:linear-gradient(to bottom,#e4e6e9 0,#ebedf0 45%,#f3f6f9 100%)"></div>
<div class="b " style="left:769.8px;top:159.3px;width:6px;height:1.1px;background:#6a6a6a"></div>
<div class="t " style="top:152.2px;height:16px;line-height:16px;font-size:10.31px;color:#333;left:780.9px;"><span class="cj" style="width:21.6px;font-size:10.8px;font-weight:bold"><span>格式</span></span></div>
<svg class="i" style="left:958.8px;top:157.8px;" width="6.8" height="6" viewBox="0 0 6.8 6"><path d="M0 0.5H6.8M0 2.9H6.8M0 5.3H6.8" stroke="#5f5f5f" stroke-width="0.9"/></svg>
<div class="t " style="top:176.6px;height:16px;line-height:16px;font-size:10.5px;color:#3c3c3c;right:166.2px;"><span class="cj" style="width:22px;font-size:11px"><span>大小</span></span>(A)<span class="cj" style="width:11px;font-size:11px"><span>：</span></span></div>
<div class="b " style="left:839.2px;top:174.2px;width:109.2px;height:20.8px;background:#fff;border:1px solid #d3d6da;border-radius:2.5px"></div>
<div class="t " style="top:176.8px;height:16px;line-height:16px;font-size:10.5px;color:#333;left:844.6px;">A4</div>
<svg class="i" style="left:935.1px;top:183.4px;" width="6" height="3.4" viewBox="0 0 6 3.4"><path d="M0 0H6L3 3.4Z" fill="#1e1e1e"/></svg>
<div class="t " style="top:203px;height:16px;line-height:16px;font-size:10.5px;color:#3c3c3c;right:166.2px;"><span class="cj" style="width:22px;font-size:11px"><span>宽度</span></span>(B)<span class="cj" style="width:11px;font-size:11px"><span>：</span></span></div>
<div class="b " style="left:839.2px;top:200.4px;width:109.2px;height:20.8px;background:#fff;border:1px solid #d3d6da;border-radius:2.5px"></div>
<div class="t " style="top:203px;height:16px;line-height:16px;font-size:10.5px;color:#333;left:841.2px;">21.00 <span class="cj" style="width:22px;font-size:11px"><span>厘米</span></span></div>
<div class="b " style="left:906px;top:201.4px;width:1px;height:18.8px;background:#dfe2e5"></div>
<div class="b " style="left:927.6px;top:201.4px;width:1px;height:18.8px;background:#dfe2e5"></div>
<div class="b " style="left:913.4px;top:210.4px;width:6.4px;height:1.1px;background:#555"></div>
<svg class="i" style="left:934.6px;top:207.5px;" width="6.8" height="6.8" viewBox="0 0 6.8 6.8"><path d="M0 3.4H6.8M3.4 0V6.8" stroke="#555" stroke-width="1.05"/></svg>
<div class="t " style="top:229.2px;height:16px;line-height:16px;font-size:10.5px;color:#3c3c3c;right:166.2px;"><span class="cj" style="width:22px;font-size:11px"><span>高度</span></span>(C)<span class="cj" style="width:11px;font-size:11px"><span>：</span></span></div>
<div class="b " style="left:839.2px;top:226.6px;width:109.2px;height:20.8px;background:#fff;border:1px solid #d3d6da;border-radius:2.5px"></div>
<div class="t " style="top:229.2px;height:16px;line-height:16px;font-size:10.5px;color:#333;left:841.2px;">29.70 <span class="cj" style="width:22px;font-size:11px"><span>厘米</span></span></div>
<div class="b " style="left:906px;top:227.6px;width:1px;height:18.8px;background:#dfe2e5"></div>
<div class="b " style="left:927.6px;top:227.6px;width:1px;height:18.8px;background:#dfe2e5"></div>
<div class="b " style="left:913.4px;top:236.6px;width:6.4px;height:1.1px;background:#555"></div>
<svg class="i" style="left:934.6px;top:233.7px;" width="6.8" height="6.8" viewBox="0 0 6.8 6.8"><path d="M0 3.4H6.8M3.4 0V6.8" stroke="#555" stroke-width="1.05"/></svg>
<div class="t " style="top:255.6px;height:16px;line-height:16px;font-size:10.5px;color:#3c3c3c;right:166.2px;"><span class="cj" style="width:22px;font-size:11px"><span>方向</span></span>(D)<span class="cj" style="width:11px;font-size:11px"><span>：</span></span></div>
<div class="b " style="left:839.2px;top:253px;width:109.2px;height:20.8px;background:#fff;border:1px solid #d3d6da;border-radius:2.5px"></div>
<div class="t " style="top:255.6px;height:16px;line-height:16px;font-size:10.5px;color:#333;left:844.6px;"><span class="cj" style="width:22px;font-size:11px"><span>纵向</span></span></div>
<svg class="i" style="left:935.1px;top:262.2px;" width="6" height="3.4" viewBox="0 0 6 3.4"><path d="M0 0H6L3 3.4Z" fill="#1e1e1e"/></svg>
<div class="t " style="top:281.8px;height:16px;line-height:16px;font-size:10.5px;color:#3c3c3c;right:166.2px;"><span class="cj" style="width:22px;font-size:11px"><span>边距</span></span>(E)<span class="cj" style="width:11px;font-size:11px"><span>：</span></span></div>
<div class="b " style="left:839.2px;top:279.2px;width:109.2px;height:20.8px;background:#fff;border:1px solid #d3d6da;border-radius:2.5px"></div>
<div class="t " style="top:281.8px;height:16px;line-height:16px;font-size:10.5px;color:#333;left:844.6px;"><span class="cj" style="width:22px;font-size:11px"><span>常规</span></span> 1 <span class="cj" style="width:22px;font-size:11px"><span>英寸</span></span></div>
<svg class="i" style="left:935.1px;top:288.4px;" width="6" height="3.4" viewBox="0 0 6 3.4"><path d="M0 0H6L3 3.4Z" fill="#1e1e1e"/></svg>
<div class="b " style="left:764.6px;top:305.8px;width:204px;height:21.2px;background:linear-gradient(to bottom,#e4e6e9 0,#ebedf0 45%,#f3f6f9 100%)"></div>
<div class="b " style="left:769.8px;top:315.3px;width:6px;height:1.1px;background:#6a6a6a"></div>
<div class="t " style="top:308.2px;height:16px;line-height:16px;font-size:10.31px;color:#333;left:780.9px;"><span class="cj" style="width:21.6px;font-size:10.8px;font-weight:bold"><span>样式</span></span></div>
<svg class="i" style="left:958.8px;top:313.8px;" width="6.8" height="6" viewBox="0 0 6.8 6"><path d="M0 0.5H6.8M0 2.9H6.8M0 5.3H6.8" stroke="#5f5f5f" stroke-width="0.9"/></svg>
<div class="t " style="top:332.4px;height:16px;line-height:16px;font-size:10.5px;color:#3c3c3c;right:170.8px;"><span class="cj" style="width:22px;font-size:11px"><span>数字</span></span>(A)<span class="cj" style="width:11px;font-size:11px"><span>：</span></span></div>
<div class="b " style="left:834.8px;top:329.8px;width:109.4px;height:20.8px;background:#fff;border:1px solid #d3d6da;border-radius:2.5px"></div>
<div class="t " style="top:332.4px;height:16px;line-height:16px;font-size:10.5px;color:#333;left:840.2px;">1, 2, 3, ...</div>
<svg class="i" style="left:930.9px;top:339px;" width="6" height="3.4" viewBox="0 0 6 3.4"><path d="M0 0H6L3 3.4Z" fill="#1e1e1e"/></svg>
<div class="t " style="top:358.8px;height:16px;line-height:16px;font-size:10.5px;color:#3c3c3c;right:170.8px;"><span class="cj" style="width:22px;font-size:11px"><span>背景</span></span>(B)<span class="cj" style="width:11px;font-size:11px"><span>：</span></span></div>
<div class="b " style="left:834.8px;top:356.4px;width:109.4px;height:20.8px;background:#fff;border:1px solid #d3d6da;border-radius:2.5px"></div>
<div class="t " style="top:359px;height:16px;line-height:16px;font-size:10.5px;color:#333;left:840.2px;"><span class="cj" style="width:11px;font-size:11px"><span>无</span></span></div>
<svg class="i" style="left:930.9px;top:365.6px;" width="6" height="3.4" viewBox="0 0 6 3.4"><path d="M0 0H6L3 3.4Z" fill="#1e1e1e"/></svg>
<div class="t " style="top:385.2px;height:16px;line-height:16px;font-size:10.5px;color:#3c3c3c;right:170.8px;"><span class="cj" style="width:22px;font-size:11px"><span>布局</span></span>(C)<span class="cj" style="width:11px;font-size:11px"><span>：</span></span></div>
<div class="b " style="left:834.8px;top:382.8px;width:109.4px;height:20.8px;background:#fff;border:1px solid #d3d6da;border-radius:2.5px"></div>
<div class="t " style="top:385.4px;height:16px;line-height:16px;font-size:10.5px;color:#333;left:840.2px;"><span class="cj" style="width:33px;font-size:11px"><span>左和右</span></span></div>
<svg class="i" style="left:930.9px;top:392px;" width="6" height="3.4" viewBox="0 0 6 3.4"><path d="M0 0H6L3 3.4Z" fill="#1e1e1e"/></svg>
<div class="t " style="top:411.4px;height:16px;line-height:16px;font-size:10.5px;color:#3c3c3c;right:170.8px;"><span class="cj" style="width:22px;font-size:11px"><span>列数</span></span>(D)<span class="cj" style="width:11px;font-size:11px"><span>：</span></span></div>
<div class="b " style="left:834.8px;top:408.8px;width:109.4px;height:20.8px;background:#fff;border:1px solid #d3d6da;border-radius:2.5px"></div>
<div class="t " style="top:411.4px;height:16px;line-height:16px;font-size:10.5px;color:#333;left:840.2px;">1<span class="cj" style="width:11px;font-size:11px"><span>栏</span></span></div>
<svg class="i" style="left:930.9px;top:418px;" width="6" height="3.4" viewBox="0 0 6 3.4"><path d="M0 0H6L3 3.4Z" fill="#1e1e1e"/></svg>
<div class="b " style="left:764.6px;top:435.6px;width:204px;height:18.8px;background:linear-gradient(to bottom,#e4e6e9 0,#ebedf0 45%,#f3f6f9 100%)"></div>
<svg class="i" style="left:769.4px;top:441.5px;" width="6.6" height="6.6" viewBox="0 0 6.6 6.6"><path d="M0 3.3H6.6M3.3 0V6.6" stroke="#555" stroke-width="1"/></svg>
<div class="t " style="top:437.1px;height:16px;line-height:16px;font-size:10.31px;color:#333;left:780.9px;"><span class="cj" style="width:21.6px;font-size:10.8px;font-weight:bold"><span>页眉</span></span></div>
<svg class="i" style="left:958.8px;top:442.7px;" width="6.8" height="6" viewBox="0 0 6.8 6"><path d="M0 0.5H6.8M0 2.9H6.8M0 5.3H6.8" stroke="#5f5f5f" stroke-width="0.9"/></svg>
<div class="b " style="left:764.6px;top:455px;width:204px;height:19.4px;background:linear-gradient(to bottom,#e4e6e9 0,#ebedf0 45%,#f3f6f9 100%)"></div>
<svg class="i" style="left:769.4px;top:461.2px;" width="6.6" height="6.6" viewBox="0 0 6.6 6.6"><path d="M0 3.3H6.6M3.3 0V6.6" stroke="#555" stroke-width="1"/></svg>
<div class="t " style="top:456.8px;height:16px;line-height:16px;font-size:10.31px;color:#333;left:780.9px;"><span class="cj" style="width:21.6px;font-size:10.8px;font-weight:bold"><span>页脚</span></span></div>
<svg class="i" style="left:958.8px;top:462.4px;" width="6.8" height="6" viewBox="0 0 6.8 6"><path d="M0 0.5H6.8M0 2.9H6.8M0 5.3H6.8" stroke="#5f5f5f" stroke-width="0.9"/></svg>
<div class="b " style="left:768.4px;top:481px;width:4.6px;height:4.2px;border-left:1px solid #e1e4e7;border-top:1px solid #e1e4e7"></div>
<svg class="i" style="left:810px;top:448px;" width="96" height="40" viewBox="0 0 96 40"><ellipse cx="47" cy="30.5" rx="39.5" ry="22.6" fill="#f3f6f9" style="filter:blur(0.7px)"/><path d="M32.4 11.2Q37.8 5.4 43.2 11.2M48 11.2Q53.4 5.4 58.8 11.2" fill="none" stroke="#c2c5c9" stroke-width="0.8"/></svg>
<svg class="i" style="left:979px;top:134.4px;" width="13" height="13.4" viewBox="0 0 13 13.4"><path d="M0 2.6H13M0 10.6H13" stroke="#3e3e3e" stroke-width="0.9"/><circle cx="6.6" cy="2.6" r="1.7" fill="#3e3e3e"/><circle cx="2.2" cy="10.6" r="1.6" fill="#f3f6f9" stroke="#3e3e3e" stroke-width="0.8"/></svg>
<div class="b " style="left:976px;top:154px;width:19px;height:1px;background:#e7eaed"></div>
<svg class="i" style="left:979.6px;top:163.7px;" width="11.8" height="11.8" viewBox="0 0 11.8 11.8"><rect x="0.6" y="0.6" width="10.6" height="10.6" fill="#fff" stroke="#3e3e3e" stroke-width="1.1"/><rect x="0.6" y="0.6" width="10.6" height="2.8" fill="#3e3e3e"/><rect x="1.6" y="4.6" width="3.4" height="5.8" fill="#3e3e3e"/><path d="M6.2 5.4H9.8M6.2 7.4H9.8M6.2 9.4H8.6" stroke="#777" stroke-width="0.8"/></svg>
<div class="b " style="left:974.8px;top:183.8px;width:22px;height:21.8px;background:#f9fafc;border:1px solid #d6d9dd;border-radius:2.5px"></div>
<svg class="i" style="left:980px;top:189.6px;" width="11" height="11.6" viewBox="0 0 11 11.6"><path d="M0.6 0.6H7L10.4 4V11H0.6Z" fill="#fff" stroke="#3e3e3e" stroke-width="1.1"/><path d="M7 0.6V4H10.4" fill="none" stroke="#3e3e3e" stroke-width="0.9"/></svg>
<svg class="i" style="left:979.4px;top:214.6px;" width="12.4" height="12.6" viewBox="0 0 12.4 12.6"><path d="M3.2 1H12M7.6 1V8" stroke="#3e3e3e" stroke-width="1.5" fill="none"/><path d="M0.6 12V5.2L9.8 12Z" fill="none" stroke="#3e3e3e" stroke-width="1"/></svg>
<svg class="i" style="left:979.6px;top:240.8px;" width="12" height="12" viewBox="0 0 12 12"><rect x="0.6" y="0.6" width="10.8" height="10.8" fill="#fff" stroke="#3e3e3e" stroke-width="1.1"/><path d="M1.4 10L4.4 6.6L6.2 8.4L8.4 5.8L10.8 8.6" fill="none" stroke="#3e3e3e" stroke-width="0.9"/><circle cx="3.6" cy="3.6" r="1" fill="none" stroke="#3e3e3e" stroke-width="0.8"/></svg>
<svg class="i" style="left:979.5px;top:266px;" width="12" height="12" viewBox="0 0 12 12"><circle cx="6" cy="6" r="5.3" fill="#fff" stroke="#3e3e3e" stroke-width="1.1"/><path d="M8.2 3.8L6.8 6.8L3.8 8.2L5.2 5.2Z" fill="#3e3e3e"/></svg>
<svg class="i" style="left:980px;top:291.6px;" width="11" height="12" viewBox="0 0 11 12"><path d="M0.6 0.6H7L10.4 4V11.4H0.6Z" fill="#fff" stroke="#3e3e3e" stroke-width="1.1"/><path d="M3 6H8M3 8.2H8" stroke="#3e3e3e" stroke-width="0.9"/></svg>
<svg class="i" style="left:979.4px;top:316.6px;" width="13" height="12.6" viewBox="0 0 13 12.6"><path d="M3.2 1H10M6.8 1V8" stroke="#3e3e3e" stroke-width="1.5" fill="none"/><path d="M0.6 12V5.2L9.8 12Z" fill="none" stroke="#3e3e3e" stroke-width="1"/><path d="M11 3.4H13M11 5.6H13" stroke="#e4434b" stroke-width="0.9"/></svg>
</div>
<div id="statusbar">
<div class="b " style="left:37px;top:546px;width:963px;height:16px;background:#f3f7fa;border-top:1.3px solid #d6d9dc"></div>
<div class="t sb" style="top:546.6px;height:16px;line-height:16px;font-size:8.5px;color:#3d3d3d;left:44.5px;letter-spacing:0;-webkit-text-stroke:0.18px"><span class="cj" style="width:8.9px;font-size:8.9px"><span>第</span></span> 1 <span class="cj" style="width:26.7px;font-size:8.9px"><span>页，共</span></span> 2 <span class="cj" style="width:8.9px;font-size:8.9px"><span>页</span></span></div>
<div class="t sb" style="top:546.6px;height:16px;line-height:16px;font-size:8.5px;color:#3d3d3d;left:196px;letter-spacing:0;-webkit-text-stroke:0.18px">0 <span class="cj" style="width:26.7px;font-size:8.9px"><span>个单词</span></span>/<span class="cj" style="width:17.8px;font-size:8.9px"><span>字，</span></span>0 <span class="cj" style="width:26.7px;font-size:8.9px"><span>个字符</span></span></div>
<div class="t sb" style="top:546.6px;height:16px;line-height:16px;font-size:8.5px;color:#3d3d3d;left:373.6px;letter-spacing:0;-webkit-text-stroke:0.18px"><span class="cj" style="width:35.6px;font-size:8.9px"><span>默认样式</span></span></div>
<div class="t sb" style="top:546.6px;height:16px;line-height:16px;font-size:8.5px;color:#3d3d3d;left:535px;letter-spacing:0;-webkit-text-stroke:0.18px"><span class="cj" style="width:17.8px;font-size:8.9px"><span>默认</span></span></div>
<div class="b " style="left:190px;top:549px;width:1.2px;height:11.5px;background:#85888c"></div>
<div class="b " style="left:367px;top:549px;width:1.2px;height:11.5px;background:#85888c"></div>
<div class="b " style="left:490px;top:549px;width:1.2px;height:11.5px;background:#85888c"></div>
<div class="b " style="left:595px;top:549px;width:1.2px;height:11.5px;background:#85888c"></div>
<div class="b " style="left:644px;top:549px;width:1.2px;height:11.5px;background:#85888c"></div>
<div class="b " style="left:666px;top:549px;width:1.2px;height:11.5px;background:#85888c"></div>
<div class="b " style="left:687px;top:549px;width:1.2px;height:11.5px;background:#85888c"></div>
<div class="b " style="left:708px;top:549px;width:1.2px;height:11.5px;background:#85888c"></div>
<div class="b " style="left:804px;top:549px;width:1.2px;height:11.5px;background:#85888c"></div>
<div class="b " style="left:859px;top:549px;width:1.2px;height:11.5px;background:#85888c"></div>
<div class="b " style="left:964px;top:549px;width:1.2px;height:11.5px;background:#85888c"></div>
<svg class="i" style="left:651.6px;top:551.2px;" width="11" height="8" viewBox="0 0 11 8"><path d="M0.3 0.5H3.3M1.8 0.5V7.5M0.3 7.5H3.3" stroke="#4e4e4e" stroke-width="0.85" fill="none"/><path d="M4.8 7.5H10.2" stroke="#5a5a5a" stroke-width="0.85"/></svg>
<svg class="i" style="left:674.2px;top:550.9px;" width="7.4" height="7.4" viewBox="0 0 7.4 7.4"><path d="M0.5 0.5H5.6L6.9 1.8V6.9H0.5Z" fill="#fdf3f3" stroke="#df555d" stroke-width="0.95"/><path d="M2.1 0.6V2.8H5V0.6M1.9 6.8V4.4H5.5V6.8" fill="none" stroke="#df555d" stroke-width="0.8"/></svg>
<svg class="i" style="left:812px;top:550.2px;" width="7" height="9" viewBox="0 0 7 9"><path d="M0.5 0.5H4.4L6.5 2.6V8.5H0.5Z" fill="#fff" stroke="#3b8fd6" stroke-width="1"/><path d="M4.4 0.5V2.6H6.5" fill="none" stroke="#3b8fd6" stroke-width="0.8"/></svg>
<svg class="i" style="left:823.6px;top:550.2px;" width="14" height="9" viewBox="0 0 14 9"><path d="M0.5 0.5H4L5.8 2.3V8.5H0.5ZM7.6 0.5H11.1L12.9 2.3V8.5H7.6Z" fill="#fff" stroke="#a9adb2" stroke-width="0.9"/></svg>
<svg class="i" style="left:840.4px;top:550.6px;" width="13" height="8.4" viewBox="0 0 13 8.4"><path d="M0.5 1.6Q3.4 0 6.5 1.6Q9.6 0 12.5 1.6V7.8Q9.6 6.4 6.5 7.8Q3.4 6.4 0.5 7.8ZM6.5 1.6V7.8" fill="#fff" stroke="#a9adb2" stroke-width="0.9"/></svg>
<div class="b " style="left:868.2px;top:554.2px;width:4.6px;height:1px;background:#555"></div>
<div class="b " style="left:879px;top:554.2px;width:69px;height:1px;background:#8a8d91"></div>
<div class="b " style="left:889.6px;top:552.2px;width:1px;height:5px;background:#8a8d91"></div>
<div class="b" style="left:905.8px;top:551.8px;width:5.6px;height:5.6px;border-radius:50%;background:#f7f8fa;border:1px solid #555"></div>
<svg class="i" style="left:952.6px;top:552px;" width="5.4" height="5.4" viewBox="0 0 5.4 5.4"><path d="M0 2.7H5.4M2.7 0V5.4" stroke="#555" stroke-width="0.95"/></svg>
<div class="t " style="top:546.6px;height:16px;line-height:16px;font-size:9.17px;color:#3d3d3d;left:973.2px;letter-spacing:0">90%</div>
</div>
<svg class="i" style="left:560px;top:323px;filter:drop-shadow(0.8px 1.6px 1.4px rgba(0,0,0,.4))" width="50" height="72" viewBox="-10 -10 50 72"><path d="M0 0V45.4L9.7 36.6L17.2 52.6L23.6 49.6L16.2 33.8L29 32.4Z" fill="#252525" stroke="#fff" stroke-width="2.2" stroke-linejoin="round"/></svg>
</div>
</body>
</html>
